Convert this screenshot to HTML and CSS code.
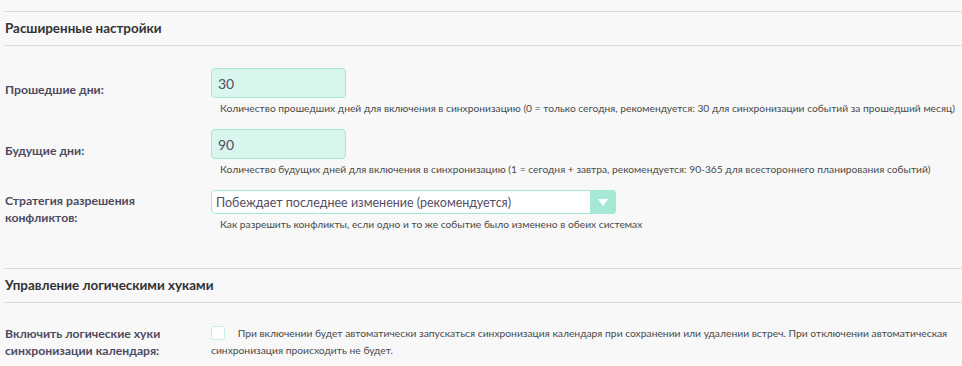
FILE: index.html
```html
<!DOCTYPE html>
<html lang="ru">

    <head>
        <meta charset="UTF-8">
        <meta name="viewport" content="width=device-width, initial-scale=1.0">
        <title>Расширенные настройки</title>
        <link rel="stylesheet" href="styles.css">
    </head>

    <body>

        <section class="settings">
            <h2 class="section-head">Расширенные настройки</h2>

            <div class="field-row first">
                <label class="field-label" for="past-days">Прошедшие дни:</label>
                <div class="field-value">
                    <input class="text-input" id="past-days" type="text" value="30">
                    <div class="field-help">Количество прошедших дней для включения в синхронизацию (0 = только сегодня, рекомендуется: 30 для синхронизации событий за прошедший месяц)</div>
                </div>
            </div>

            <div class="field-row">
                <label class="field-label" for="future-days">Будущие дни:</label>
                <div class="field-value">
                    <input class="text-input" id="future-days" type="text" value="90">
                    <div class="field-help">Количество будущих дней для включения в синхронизацию (1 = сегодня + завтра, рекомендуется: 90-365 для всестороннего планирования событий)</div>
                </div>
            </div>

            <div class="field-row">
                <label class="field-label" for="conflict">Стратегия разрешения<br>конфликтов:</label>
                <div class="field-value">
                    <div class="select-wrap">
                        <select id="conflict" class="select-input">
                            <option>Побеждает последнее изменение (рекомендуется)</option>
                        </select>
                        <span class="select-arrow"></span>
                    </div>
                    <div class="field-help">Как разрешить конфликты, если одно и то же событие было изменено в обеих системах</div>
                </div>
            </div>

            <h2 class="section-head second">Управление логическими хуками</h2>

            <div class="field-row hooks">
                <label class="field-label" for="hooks">Включить логические хуки<br>синхронизации календаря:</label>
                <div class="field-value check-text">
                    <input class="check-input" id="hooks" type="checkbox">
                    При включении будет автоматически запускаться синхронизация календаря при сохранении или удалении встреч. При отключении автоматическая синхронизация происходить не будет.
                </div>
            </div>
        </section>

    </body>

</html>
```

FILE: styles.css
```css
body {
    font-family: Lato, 'Liberation Sans', sans-serif;
    background-color: #f8f8f8;
    margin: 0;
    padding: 0;
    color: #534d64;
}

.settings {
    margin: 11px 0 0 4px;
}

.section-head {
    margin: 0;
    padding: 9px 0 9px 1px;
    border-top: 1px solid #dddddd;
    border-bottom: 1px solid #dddddd;
    font-size: 13.4px;
    line-height: 15px;
    font-weight: bold;
    color: #333333;
}

.section-head.second {
    margin-top: 37px;
}

.field-row {
    display: grid;
    grid-template-columns: 207px 1fr;
    align-items: center;
    margin-top: 14px;
}

.field-row.first {
    margin-top: 22px;
}

.field-row.hooks {
    margin-top: 22px;
}

.field-label {
    padding: 0 0 4px 1px;
    font-size: 12.2px;
    line-height: 17px;
    font-weight: bold;
    color: #4d4a60;
}

.hooks .field-label {
    padding-bottom: 0;
}

.text-input {
    display: block;
    width: 135px;
    height: 30px;
    box-sizing: border-box;
    padding: 0 6px;
    background-color: #d8f5ee;
    border: 1px solid #a5e8d6;
    border-radius: 4px;
    font-family: inherit;
    font-size: 14px;
    color: #534d64;
    outline: none;
}

.field-help {
    padding: 4px 0 0 9px;
    font-size: 10.25px;
    line-height: 13px;
    white-space: nowrap;
    color: #4a4a4a;
}

.select-wrap {
    position: relative;
    width: 405px;
    height: 24px;
}

.select-input {
    appearance: none;
    width: 100%;
    height: 24px;
    box-sizing: border-box;
    padding: 0 30px 0 4px;
    background-color: #fff;
    border: 1px solid #a5e8d6;
    border-radius: 4px;
    font-family: inherit;
    font-size: 12.5px;
    color: #534d64;
    outline: none;
}

.select-arrow {
    position: absolute;
    top: 0;
    right: 0;
    width: 26px;
    height: 24px;
    background-color: #a5e8d6;
    border-radius: 0 4px 4px 0;
    pointer-events: none;
}

.select-arrow::after {
    content: '';
    position: absolute;
    top: 9px;
    left: 8px;
    border-left: 5px solid transparent;
    border-right: 5px solid transparent;
    border-top: 7px solid #fff;
}

.check-text {
    font-size: 10.3px;
    line-height: 17px;
    color: #4a4a4a;
}

.check-input {
    appearance: none;
    width: 14px;
    height: 14px;
    margin: 0 10px 0 0;
    vertical-align: -3px;
    background-color: #fff;
    border: 1px solid #c3efe3;
    border-radius: 3px;
}
```
